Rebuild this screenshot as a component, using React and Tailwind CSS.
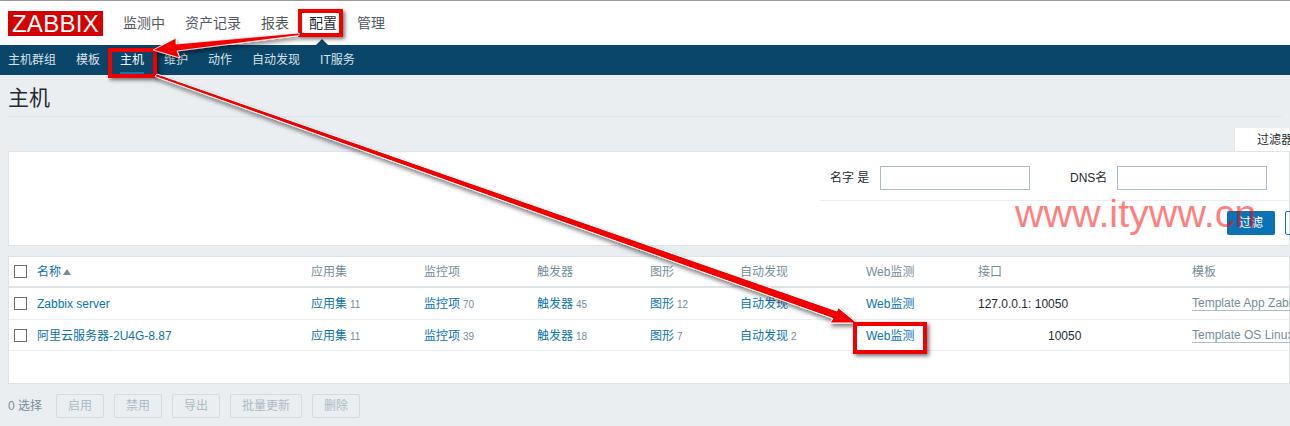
const FONT = "font-['Liberation_Sans','Noto_Sans_CJK_SC',sans-serif]";

const topNav = ['监测中', '资产记录', '报表', '配置', '管理'];
const subNav = ['主机群组', '模板', '主机', '维护', '动作', '自动发现', 'IT服务'];
const columns = ['应用集', '监控项', '触发器', '图形', '自动发现', 'Web监测', '接口', '模板'];
const bulk = ['启用', '禁用', '导出', '批量更新', '删除'];

const rowGrid = 'grid grid-cols-[23px_274px_113px_113px_113px_90px_126px_112px_214px_1fr] items-center pl-[5px]';

const hosts = [
  {
    name: 'Zabbix server',
    counts: [11, 70, 45, 12, null],
    iface: <span>127.0.0.1: 10050</span>,
    template: 'Template App Zabbix Server',
  },
  {
    name: '阿里云服务器-2U4G-8.87',
    counts: [11, 39, 18, 7, 2],
    iface: <span className="pl-[70px]">10050</span>,
    template: 'Template OS Linux',
  },
];

function Checkbox() {
  return <span className="block w-[13px] h-[13px] border border-[#6d6d6d] bg-white" />;
}

function LinkCount({ label, count }) {
  return (
    <span className="whitespace-nowrap">
      <span className="text-[#0a72b5]">{label}</span>
      {count != null && <span className="ml-[3px] text-[10px] text-[#768d99]">{count}</span>}
    </span>
  );
}

function RedBox({ className }) {
  return <div className={`absolute border-[#f00000] shadow-[2px_2px_4px_rgba(0,0,0,0.55)] ${className}`} />;
}

function Arrows() {
  return (
    <svg className="absolute left-0 top-0 pointer-events-none" width="1290" height="426" viewBox="0 0 1290 426">
      <defs>
        <filter id="drop" x="-5%" y="-5%" width="110%" height="115%">
          <feDropShadow dx="1" dy="3" stdDeviation="2" floodColor="#000" floodOpacity="0.5" />
        </filter>
      </defs>
      <g filter="url(#drop)">
        <path d="M299 33 L176 44 L176 38 L153 50 L180 58 L177 51 L299 35.5 Z" fill="#f00000" stroke="#fff" strokeWidth="0.8" />
        <path d="M157 74 L837 311 L838 307.5 L857 323 L830 323 L833 318.5 L155 76.5 Z" fill="#f00000" stroke="#fff" strokeWidth="1" />
      </g>
    </svg>
  );
}

export default function App() {
  return (
    <div className={`${FONT} relative w-[1290px] h-[426px] overflow-hidden bg-[#ebeef0] text-[12px] text-[#1f2c33]`}>
      {/* Top menu */}
      <header className="h-[45px] bg-white border-t border-[#9a9a9a] flex items-center pl-[8px]">
        <div className="w-[95px] h-[25px] bg-[#d40000] text-white text-[24px] leading-[25px] text-center tracking-[0.3px]">
          ZABBIX
        </div>
        <nav className="flex ml-[20px] gap-[20px] text-[14px] text-[#535a5f]">
          {topNav.map((item) => (
            <span key={item} className={item === '配置' ? 'text-[#1f2c33]' : ''}>{item}</span>
          ))}
        </nav>
      </header>

      {/* Sub menu */}
      <nav className="relative h-[30px] bg-[#0a466a] flex items-center pl-[8px] gap-[20px] text-[#d6e2e9]">
        {subNav.map((item) => (
          <span key={item} className={item === '主机' ? 'relative text-white leading-[30px]' : 'leading-[30px]'}>
            {item}
            {item === '主机' && <span className="absolute left-0 right-0 bottom-[1px] h-[2px] bg-[#1a74b0]" />}
          </span>
        ))}
        <span className="absolute left-[316px] top-[-6px] w-0 h-0 border-x-[6px] border-x-transparent border-b-[6px] border-b-[#0a466a]" />
      </nav>

      {/* Page title */}
      <div className="mx-[8px] h-[42px] pt-[4px] border-b border-[#dfe4e7] flex items-center text-[21px] text-[#1f2c33]">主机</div>

      {/* Filter */}
      <div className="ml-[1234px] mt-[11px] w-[80px] h-[23px] bg-white border-x border-[#dfe4e7] pl-[22px] leading-[24px] whitespace-nowrap">
        过滤器
      </div>
      <section className="ml-[8px] h-[95px] bg-white border border-[#dfe4e7]">
        <div className="ml-[811px] h-[49px] border-b border-[#ebeef0] flex items-center pl-[10px] pt-[4px]">
          <span className="w-[50px] shrink-0">名字 是</span>
          <span className="w-[150px] h-[24px] shrink-0 border border-[#acbbc4]" />
          <span className="ml-[40px] w-[47px] shrink-0">DNS名</span>
          <span className="w-[150px] h-[24px] shrink-0 border border-[#acbbc4]" />
        </div>
        <div className="flex ml-[1218px] mt-[10px] gap-[10px]">
          <button className="w-[48px] h-[24px] shrink-0 bg-[#0a72b5] text-white rounded-[2px]">过滤</button>
          <button className="w-[48px] h-[24px] shrink-0 border border-[#0a72b5] text-[#0a72b5] rounded-[2px]">重设</button>
        </div>
      </section>

      {/* Hosts table */}
      <section className="ml-[8px] mt-[10px] h-[128px] bg-white border border-[#dfe4e7]">
        <div className={`${rowGrid} h-[31px] border-b-[2px] border-[#dfe4e7] text-[#768d99]`}>
          <Checkbox />
          <span className="flex items-center text-[#0a72b5]">
            名称
            <span className="ml-[2px] w-0 h-0 border-x-[4px] border-x-transparent border-b-[6px] border-b-[#768d99]" />
          </span>
          {columns.map((col) => (
            <span key={col}>{col}</span>
          ))}
        </div>
        {hosts.map((host) => (
          <div key={host.name} className={`${rowGrid} h-[32px] border-b border-[#ebeef0] last:h-[31px] last:pt-[1px]`}>
            <Checkbox />
            <span className="text-[#0a72b5]">{host.name}</span>
            {['应用集', '监控项', '触发器', '图形', '自动发现'].map((label, i) => (
              <LinkCount key={label} label={label} count={host.counts[i]} />
            ))}
            <span className="text-[#0a72b5]">Web监测</span>
            {host.iface}
            <span className="justify-self-start whitespace-nowrap text-[#768d99] border-b border-[#acbbc4] leading-[14px]">
              {host.template}
            </span>
          </div>
        ))}
      </section>

      {/* Bulk actions */}
      <div className="flex items-center ml-[8px] mt-[10px] text-[#768d99]">
        <span className="w-[48px]">0 选择</span>
        {bulk.map((item) => (
          <button
            key={item}
            className="h-[24px] px-[11px] mr-[10px] border border-[#d3dae0] rounded-[2px] text-[#acbbc4] bg-[#ebeef0]"
          >
            {item}
          </button>
        ))}
      </div>

      {/* Screenshot annotations */}
      <RedBox className="left-[298px] top-[9px] w-[45px] h-[28px] border-[4px]" />
      <RedBox className="left-[108px] top-[48px] w-[49px] h-[30px] border-[4px]" />
      <Arrows />
      <RedBox className="left-[853px] top-[322px] w-[74px] h-[32px] border-[4px]" />
      <div className="absolute left-[1015px] top-[188px] text-[39.5px] leading-[50px] text-[#ff0000]/50 whitespace-nowrap">
        www.ityww.cn
      </div>
    </div>
  );
}
